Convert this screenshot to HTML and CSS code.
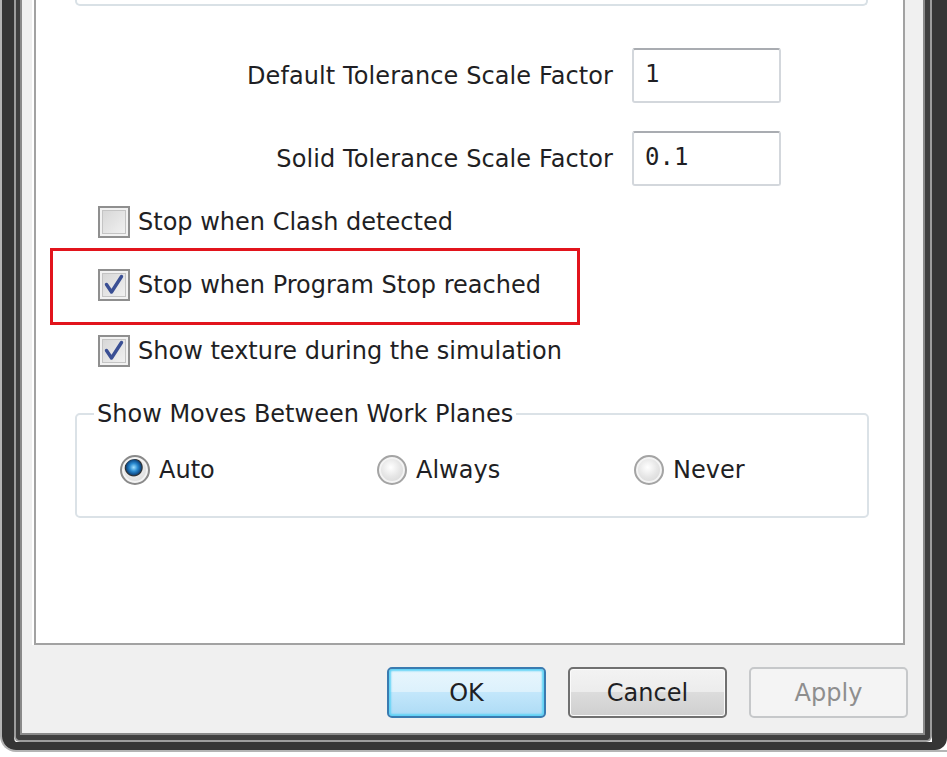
FILE: index.html
```html
<!DOCTYPE html>
<html lang="en">
<head>
    <meta charset="UTF-8">
    <title>Simulation Options</title>
    <link rel="stylesheet" href="styles.css">
</head>
<body>
<div class="frame">
    <div class="frame-dark">
        <div class="frame-light">
            <div class="frame-mid">
                <div class="frame-inner">
                    <div class="client">
                        <div class="panel">
                            <div class="group-top"></div>

                            <div class="fields">
                                <div class="field-row">
                                    <label>Default Tolerance Scale Factor</label>
                                    <div class="textbox">1</div>
                                </div>
                                <div class="field-row">
                                    <label>Solid Tolerance Scale Factor</label>
                                    <div class="textbox">0.1</div>
                                </div>
                            </div>

                            <div class="check-row">
                                <span class="box"></span>
                                <span>Stop when Clash detected</span>
                            </div>
                            <div class="highlight">
                                <div class="check-row">
                                    <span class="box">
                                        <svg viewBox="0 0 32 32" width="32" height="32"><path d="M8.5 15.5 L13.5 23 L23.5 7.5" fill="none" stroke="#3a4f94" stroke-width="3.4" stroke-linecap="round" stroke-linejoin="round"/></svg>
                                    </span>
                                    <span>Stop when Program Stop reached</span>
                                </div>
                            </div>
                            <div class="check-row last">
                                <span class="box">
                                    <svg viewBox="0 0 32 32" width="32" height="32"><path d="M8.5 15.5 L13.5 23 L23.5 7.5" fill="none" stroke="#3a4f94" stroke-width="3.4" stroke-linecap="round" stroke-linejoin="round"/></svg>
                                </span>
                                <span>Show texture during the simulation</span>
                            </div>

                            <div class="group">
                                <div class="group-title">Show Moves Between Work Planes</div>
                                <div class="radios">
                                    <div class="radio-item"><span class="radio selected"></span>Auto</div>
                                    <div class="radio-item"><span class="radio"></span>Always</div>
                                    <div class="radio-item"><span class="radio"></span>Never</div>
                                </div>
                            </div>
                        </div>

                        <div class="buttons">
                            <button class="btn btn-default">OK</button>
                            <button class="btn">Cancel</button>
                            <button class="btn" disabled>Apply</button>
                        </div>
                    </div>
                </div>
            </div>
        </div>
    </div>
</div>
</body>
</html>
```

FILE: styles.css
```css
* {
    margin: 0;
    padding: 0;
    box-sizing: border-box;
}

body {
    width: 947px;
    height: 757px;
    background-color: #ffffff;
    font-family: 'DejaVu Sans', 'Liberation Sans', sans-serif;
    font-size: 24px;
    color: #1f1f24;
    overflow: hidden;
}

/* window frame, drawn as nested stripes */
.frame {
    width: 947px;
    height: 752px;
    border-left: 2px solid #b4b4b4;
    border-bottom: 2px solid #b4b4b4;
    border-bottom-left-radius: 16px;
}

.frame-dark {
    height: 100%;
    border: solid #353535;
    border-width: 0 15px 8px 12px;
    border-radius: 0 0 12px 14px;
}

.frame-light {
    height: 100%;
    border: solid #9c9c9c;
    border-width: 0 2px 2px 2px;
    border-radius: 0 0 6px 6px;
}

.frame-mid {
    height: 100%;
    border: solid #404040;
    border-width: 0 5px 5px 4px;
    border-radius: 0 0 4px 4px;
}

.frame-inner {
    height: 100%;
    border: solid #8a8a8a;
    border-width: 0 2px 2px 2px;
}

.client {
    height: 100%;
    background-color: #f0f0f0;
    display: flex;
    flex-direction: column;
}

/* white tab page */
.panel {
    height: 645px;
    margin-left: 12px;
    width: 871px;
    background-color: #ffffff;
    border: solid #a2a2a2;
    border-width: 0 2px 2px 2px;
    box-shadow: -2px 0 0 #ffffff;
}

.group-top {
    height: 6px;
    margin: 0 35px 0 39px;
    border: solid #d9e1e6;
    border-width: 0 2px 2px 2px;
    border-radius: 0 0 5px 5px;
}

.fields {
    margin-top: 42px;
    display: flex;
    flex-direction: column;
    gap: 28px;
}

.field-row {
    display: flex;
    justify-content: flex-end;
    align-items: center;
    gap: 19px;
    padding-right: 122px;
}

.field-row label {
    letter-spacing: 0.1px;
}

.textbox {
    width: 149px;
    height: 55px;
    border: 2px solid #d3d7dc;
    border-top-color: #a9acb1;
    border-radius: 3px;
    padding: 0 0 4px 11px;
    display: flex;
    align-items: center;
    font-family: 'DejaVu Sans Mono', monospace;
    font-size: 24px;
}

.check-row {
    height: 40px;
    display: flex;
    align-items: center;
    gap: 8px;
    margin-left: 62px;
    margin-top: 16px;
}

.check-row.last {
    margin-top: 6px;
}

.box {
    width: 32px;
    height: 32px;
    border: 2px solid #8f8f8f;
    background: linear-gradient(135deg, #d4d4d4, #f4f4f4);
    box-shadow: inset 0 0 0 2px #f2f2f2, inset 0 0 0 3px #c4c4c4;
    position: relative;
    flex-shrink: 0;
}

.box svg {
    position: absolute;
    left: -2px;
    top: -2px;
}

.highlight {
    width: 530px;
    height: 77px;
    margin: 6px 0 0 14px;
    border: 3px solid #e2141c;
    display: flex;
    align-items: center;
}

.highlight .check-row {
    margin: 0 0 3px 45px;
}

/* group box */
.group {
    margin: 42px 34px 0 39px;
    border: 2px solid #dbe2e7;
    border-radius: 5px;
    padding-bottom: 26px;
}

.group-title {
    width: max-content;
    line-height: 30px;
    margin: -16px 0 0 17px;
    padding: 0 3px;
    background-color: #ffffff;
}

.radios {
    display: flex;
    margin-top: 21px;
    padding-left: 43px;
}

.radio-item {
    width: 257px;
    height: 40px;
    flex-shrink: 0;
    display: flex;
    align-items: center;
    gap: 9px;
}

.radio {
    width: 30px;
    height: 30px;
    border-radius: 50%;
    border: 2px solid #a4a4a4;
    background: radial-gradient(circle at 45% 40%, #ffffff 0%, #e6e6e6 45%, #cfcfcf 100%);
    box-shadow: inset 0 0 0 2px #f4f4f4;
}

.radio.selected {
    border-color: #8a8a8a;
    background:
        radial-gradient(circle at 45% 40%, #9fe0ff 0%, #2a8ad0 4px, #10518f 7px, #2f2f2f 8.5px, #e8e8e8 9.5px, #cfcfcf 100%);
}

/* dialog buttons */
.buttons {
    flex: 1;
    display: flex;
    justify-content: flex-end;
    gap: 22px;
    padding: 22px 15px 0 0;
}

.btn {
    width: 159px;
    height: 51px;
    border: 2px solid #707070;
    border-radius: 5px;
    font-family: 'DejaVu Sans', 'Liberation Sans', sans-serif;
    font-size: 24px;
    color: #1f1f24;
    background: linear-gradient(#f3f3f3 0%, #ececec 50%, #dcdcdc 50%, #cfcfcf 100%);
    box-shadow: inset 0 0 0 1px #fbfbfb;
}

.btn-default {
    border-color: #3a7bb0;
    background: linear-gradient(#e8f6fd 0%, #dcf1fc 50%, #c3e7fb 50%, #addbf5 100%);
    box-shadow: inset 0 0 2px 2px #5fd2f6;
}

.btn:disabled {
    border-color: #c6c8ca;
    background: #f4f4f4;
    color: #8e8e8e;
    box-shadow: none;
}
```
